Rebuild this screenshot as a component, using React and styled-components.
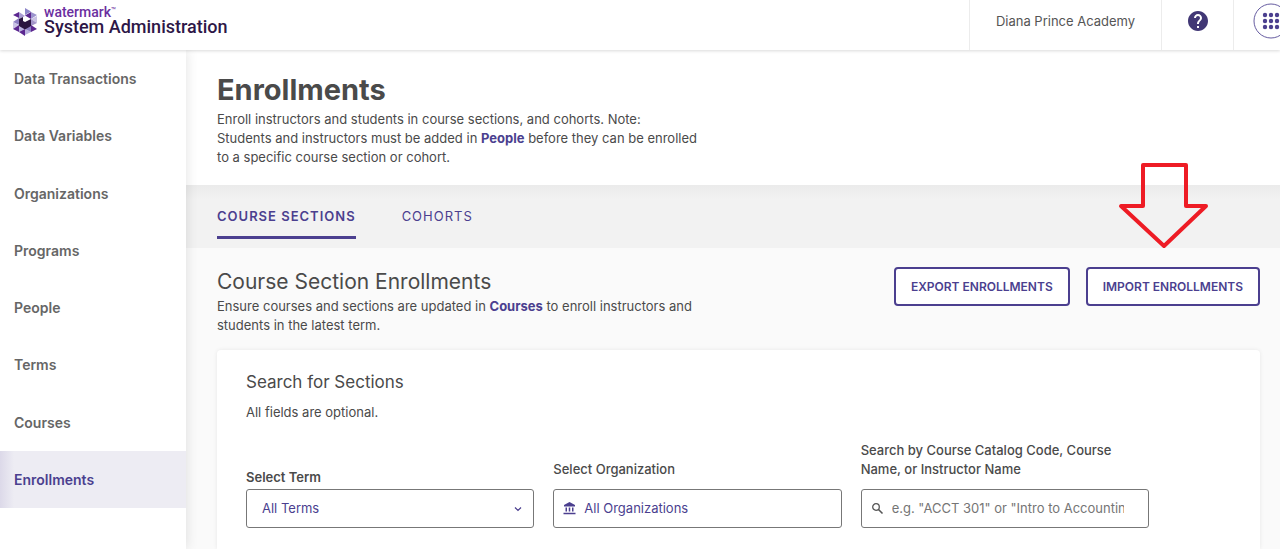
import React from "react";
import styled, { createGlobalStyle } from "styled-components";

const color = {
  purple: "#4b3f8f",
  ink: "#4a4a4a",
  line: "#ececec",
  page: "#fafafa",
};

const GlobalStyle = createGlobalStyle`
  *, *::before, *::after { box-sizing: border-box; }
  html, body { margin: 0; }
  body {
    background: ${color.page};
    color: ${color.ink};
    font-family: Inter, "Liberation Sans", sans-serif;
    font-size: 13px;
    line-height: 19px;
    overflow-x: hidden;
  }
  #root { min-height: 100vh; display: flex; flex-direction: column; }
`;

const Header = styled.header`
  position: relative;
  z-index: 2;
  display: flex;
  justify-content: space-between;
  height: 50px;
  background: #fff;
  box-shadow: 0 1px 3px rgba(0, 0, 0, 0.15);
`;

const Brand = styled.a`
  display: flex;
  align-items: flex-start;
  gap: 6px;
  padding: 7px 0 0 12px;
  color: #2e1747;
  text-decoration: none;
`;

const BrandText = styled.span`
  display: flex;
  flex-direction: column;
  font-family: Roboto, sans-serif;
  font-weight: 500;
`;

const BrandName = styled.span`
  display: flex;
  align-items: flex-start;
  color: #6b2fa0;
  font-size: 14px;
  line-height: 10px;
`;

const TradeMark = styled.span`
  font-size: 8px;
  line-height: 8px;
  font-weight: 400;
`;

const BrandProduct = styled.span`
  font-size: 18px;
  line-height: 20px;
`;

const HeaderTools = styled.div`
  display: flex;
`;

const HeaderCell = styled.div`
  display: flex;
  align-items: center;
  justify-content: ${(p) => (p.$start ? "flex-start" : "center")};
  width: ${(p) => p.$width}px;
  padding: ${(p) => (p.$start ? "0 0 8px 19px" : "0 0 8px")};
  border-left: 1px solid ${color.line};
  overflow: hidden;
  color: #555;
`;

const IconButton = styled.button`
  display: flex;
  flex: none;
  padding: 0;
  border: 0;
  background: none;
  color: ${(p) => (p.$dark ? "#413775" : color.purple)};
`;

const Body = styled.div`
  display: flex;
  flex: 1;
`;

const Sidebar = styled.nav`
  position: relative;
  z-index: 1;
  flex: none;
  width: 186px;
  background: #fff;
  box-shadow: 0 0 12px rgba(0, 0, 0, 0.12);
`;

const NavList = styled.ul`
  display: grid;
  grid-auto-rows: 1fr;
  height: 458px;
  margin: 0;
  padding: 0;
  list-style: none;
`;

const NavLink = styled.a`
  display: flex;
  align-items: center;
  height: 100%;
  padding-left: 14px;
  font-size: 14px;
  font-weight: 600;
  text-decoration: none;
  color: ${(p) => (p.$active ? color.purple : "#666")};
  background: ${(p) =>
    p.$active ? "linear-gradient(90deg, #dcd9e9, #edecf3 14px)" : "none"};
`;

const Main = styled.main`
  position: relative;
  flex: 1;
  min-width: 0;
`;

const Hero = styled.section`
  height: 135px;
  padding: 20px 31px 0;
  background: #fff;
`;

const PageTitle = styled.h1`
  margin: 0;
  font-size: 29px;
  line-height: 40px;
  font-weight: 700;
`;

const Copy = styled.p`
  max-width: 490px;
  margin: 0;
`;

const TextLink = styled.a`
  color: ${color.purple};
  font-weight: 700;
  text-decoration: none;
`;

const Tabs = styled.div`
  display: flex;
  gap: 46px;
  height: 63px;
  padding: 0 31px;
  background: linear-gradient(#ebebeb, #f2f2f2 14px);
`;

const Tab = styled.button`
  height: 54px;
  padding: 12px 0 0;
  border: 0;
  border-bottom: 3px solid ${(p) => (p.$active ? color.purple : "transparent")};
  background: none;
  color: ${color.purple};
  font: ${(p) => (p.$active ? 600 : 400)} 13px/19px Inter, sans-serif;
  letter-spacing: 1px;
`;

const Content = styled.section`
  padding: 19px 20px 0 31px;
`;

const SectionHead = styled.div`
  display: flex;
  justify-content: space-between;
  align-items: flex-start;
`;

const SectionTitle = styled.h2`
  margin: 0;
  font-size: 21px;
  line-height: 30px;
  font-weight: 400;
`;

const Actions = styled.div`
  display: flex;
  gap: 16px;
`;

const OutlineButton = styled.button`
  height: 39px;
  padding: 0 15px;
  border: 2px solid ${color.purple};
  border-radius: 4px;
  background: #fff;
  color: ${color.purple};
  font: 600 12px/18px Inter, sans-serif;
  white-space: nowrap;
`;

const Card = styled.form`
  margin-top: 15px;
  padding: 20px 29px 21px;
  border-radius: 4px 4px 0 0;
  background: #fff;
  box-shadow: 0 0 4px rgba(0, 0, 0, 0.08);
`;

const CardTitle = styled.h3`
  margin: 0 0 9px;
  font-size: 17px;
  line-height: 24px;
  font-weight: 400;
`;

const Fields = styled.div`
  display: grid;
  grid-template-columns: repeat(3, minmax(0, 1fr));
  gap: 19px;
  align-items: end;
  margin-top: 19px;
  padding-right: 82px;
`;

const Field = styled.div`
  display: flex;
  flex-direction: column;
  gap: ${(p) => (p.$tight ? 2 : 10)}px;
`;

const Label = styled.label`
  max-width: 270px;
  font-weight: ${(p) => (p.$bold ? 600 : 500)};
`;

const Control = styled.div`
  display: flex;
  align-items: center;
  gap: 8px;
  height: 39px;
  padding: ${(p) => (p.$icon ? "0 24px 0 9px" : "0 9px 0 15px")};
  border: 1px solid #777;
  border-radius: 3px;
  background: #fff;
  color: ${color.purple};
  svg { flex: none; }
`;

const bare = `
  flex: 1;
  min-width: 0;
  padding: 0;
  border: 0;
  outline: 0;
  background: none;
  color: ${color.purple};
  font: 400 13px/19px Inter, sans-serif;
`;

const Select = styled.select`
  ${bare}
  appearance: none;
`;

const Input = styled.input`
  ${bare}
  &::placeholder { color: #757575; opacity: 1; }
`;

const Arrow = styled.svg`
  position: absolute;
  top: 110px;
  right: 70px;
  pointer-events: none;
`;

const Logo = () => (
  <svg width="26" height="30" viewBox="0 0 26 30" aria-hidden="true">
    <path d="M1 8l6-3v6z" fill="#5c2790" />
    <path d="M7 5l6 4-6 3z" fill="#a99cd2" />
    <path d="M13 1l6 3.500-6 3.500z" fill="#8d86c9" />
    <path d="M19 5v7l-6-3.500z" fill="#5c2790" />
    <path d="M19 5l6 3-6 4z" fill="#9b94cd" />
    <path d="M1 15l6-4v7z" fill="#8d7fc2" />
    <path d="M25 9v7l-6-4z" fill="#c9c2e4" />
    <path d="M19 12l6 4-6 3z" fill="#a294c8" />
    <path d="M1 15l6 3-6 4z" fill="#c9c2e4" />
    <path d="M1 22l6-4v7z" fill="#5c2790" />
    <path d="M7 18l6 4-6 3z" fill="#b9b1de" />
    <path d="M13 22v7l-6-4z" fill="#5c2790" />
    <path d="M13 22l6 3-6 3z" fill="#b9b1de" />
    <path d="M19 18v7l-6-3z" fill="#8d7fc2" />
    <path d="M19 18l6 4-6 3z" fill="#5c2790" />
    <path d="M7 12l4-2v4l2 1 6-3v7l-6 3.500L7 19z" fill="#2b1540" />
  </svg>
);

const HelpIcon = () => (
  <svg width="24" height="24" viewBox="0 0 24 24" aria-hidden="true">
    <path
      fill="currentColor"
      d="M12 2C6.480 2 2 6.480 2 12s4.480 10 10 10 10-4.480 10-10S17.520 2 12 2zm1 17h-2v-2h2v2zm2.070-7.750l-.9.920C13.450 12.900 13 13.500 13 15h-2v-.5c0-1.100.45-2.100 1.170-2.830l1.240-1.260c.37-.36.59-.86.59-1.410 0-1.100-.9-2-2-2s-2 .9-2 2H8c0-2.210 1.790-4 4-4s4 1.790 4 4c0 .88-.36 1.680-.93 2.250z"
    />
  </svg>
);

const AppsIcon = () => (
  <svg width="36" height="36" viewBox="0 0 36 36" aria-hidden="true">
    <circle cx="18" cy="18" r="17" fill="none" stroke="currentColor" strokeOpacity=".85" />
    {[12, 18, 24].map((y) =>
      [12, 18, 24].map((x) => (
        <circle key={`${x}-${y}`} cx={x} cy={y} r="2.200" fill="currentColor" />
      ))
    )}
  </svg>
);

const ChevronIcon = () => (
  <svg width="12" height="12" viewBox="0 0 12 12" aria-hidden="true">
    <path d="M3 4.500l3 3 3-3" fill="none" stroke="currentColor" strokeWidth="1.200" />
  </svg>
);

const BankIcon = () => (
  <svg width="13" height="13" viewBox="0 0 13 13" aria-hidden="true" fill="currentColor">
    <path d="M6.500 0L12 3v1.500H1V3zM2.500 5.500h1.500v4H2.500zM5.750 5.500h1.500v4h-1.500zM9 5.500h1.500v4H9zM.5 10.800h12v1.500H.5z" />
  </svg>
);

const SearchIcon = () => (
  <svg width="13" height="13" viewBox="0 0 13 13" aria-hidden="true">
    <circle cx="5" cy="5" r="3.300" fill="none" stroke="#555" strokeWidth="1.300" />
    <path d="M7.500 7.500l4 4" stroke="#555" strokeWidth="1.600" />
  </svg>
);

const navItems = [
  "Data Transactions",
  "Data Variables",
  "Organizations",
  "Programs",
  "People",
  "Terms",
  "Courses",
  "Enrollments",
];

export default function App() {
  return (
    <>
      <GlobalStyle />
      <Header>
        <Brand href="#">
          <Logo />
          <BrandText>
            <BrandName>
              watermark<TradeMark>™</TradeMark>
            </BrandName>
            <BrandProduct>System Administration</BrandProduct>
          </BrandText>
        </Brand>
        <HeaderTools>
          <HeaderCell $width={192}>Diana Prince Academy</HeaderCell>
          <HeaderCell $width={72}>
            <IconButton aria-label="Help" $dark>
              <HelpIcon />
            </IconButton>
          </HeaderCell>
          <HeaderCell $width={47} $start>
            <IconButton aria-label="Applications">
              <AppsIcon />
            </IconButton>
          </HeaderCell>
        </HeaderTools>
      </Header>
      <Body>
        <Sidebar>
          <NavList>
            {navItems.map((item) => (
              <li key={item}>
                <NavLink href="#" $active={item === "Enrollments"}>
                  {item}
                </NavLink>
              </li>
            ))}
          </NavList>
        </Sidebar>
        <Main>
          <Hero>
            <PageTitle>Enrollments</PageTitle>
            <Copy>
              Enroll instructors and students in course sections, and cohorts. Note:
              <br />
              Students and instructors must be added in <TextLink href="#">People</TextLink>{" "}
              before they can be enrolled to a specific course section or cohort.
            </Copy>
          </Hero>
          <Tabs role="tablist">
            <Tab role="tab" aria-selected="true" $active>
              COURSE SECTIONS
            </Tab>
            <Tab role="tab" aria-selected="false">
              COHORTS
            </Tab>
          </Tabs>
          <Content>
            <SectionHead>
              <div>
                <SectionTitle>Course Section Enrollments</SectionTitle>
                <Copy>
                  Ensure courses and sections are updated in{" "}
                  <TextLink href="#">Courses</TextLink> to enroll instructors and students
                  in the latest term.
                </Copy>
              </div>
              <Actions>
                <OutlineButton>EXPORT ENROLLMENTS</OutlineButton>
                <OutlineButton>IMPORT ENROLLMENTS</OutlineButton>
              </Actions>
            </SectionHead>
            <Card>
              <CardTitle>Search for Sections</CardTitle>
              <Copy>All fields are optional.</Copy>
              <Fields>
                <Field $tight>
                  <Label htmlFor="term" $bold>
                    Select Term
                  </Label>
                  <Control>
                    <Select id="term">
                      <option>All Terms</option>
                    </Select>
                    <ChevronIcon />
                  </Control>
                </Field>
                <Field>
                  <Label htmlFor="organization">Select Organization</Label>
                  <Control $icon>
                    <BankIcon />
                    <Input id="organization" defaultValue="All Organizations" />
                  </Control>
                </Field>
                <Field>
                  <Label htmlFor="search">
                    Search by Course Catalog Code, Course Name, or Instructor Name
                  </Label>
                  <Control $icon>
                    <SearchIcon />
                    <Input
                      id="search"
                      placeholder={'e.g. "ACCT 301" or "Intro to Accounting"'}
                    />
                  </Control>
                </Field>
              </Fields>
            </Card>
          </Content>
          <Arrow width="92" height="90" viewBox="0 0 92 90" aria-hidden="true">
            <path
              d="M25 5h43v41h20L46 86 3 46h22z"
              fill="none"
              stroke="#ee1c25"
              strokeWidth="4"
              strokeLinejoin="round"
            />
          </Arrow>
        </Main>
      </Body>
    </>
  );
}
